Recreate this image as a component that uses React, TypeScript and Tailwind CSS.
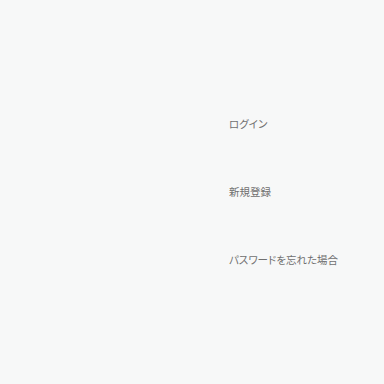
export default function App() {
  const items = ["ログイン", "新規登録", "パスワードを忘れた場合"];
  return (
    <div
      className="w-[384px] h-[384px] bg-[#f7f8f8] pl-[229px] pt-[116px]"
      style={{ fontFamily: '"Noto Sans CJK JP", "Noto Sans", sans-serif' }}
    >
      <ul className="flex flex-col gap-[52px]">
        {items.map((t) => (
          <li key={t}>
            <a className="block text-[10.5px] leading-[16px] text-[#707070] [font-feature-settings:'palt']">
              {t}
            </a>
          </li>
        ))}
      </ul>
    </div>
  );
}
